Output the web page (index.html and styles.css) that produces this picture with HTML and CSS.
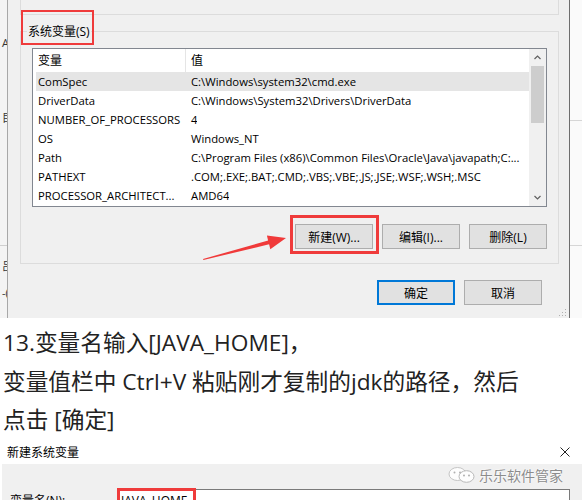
FILE: index.html
```
<!DOCTYPE html>
<html lang="zh-CN">
<head>
<meta charset="utf-8">
<title>系统变量</title>
<link rel="stylesheet" href="styles.css">
</head>
<body>
<div class="shot1">
  <div class="lstrip">
    <div class="frag fa">A</div>
    <div class="frag fb">目</div>
    <div class="sline"></div>
    <div class="frag fc">吕</div>
    <div class="frag fd">-(</div>
  </div>
  <div class="dlg">
    <div class="prev"></div>
    <div class="group">
      <div class="legend">系统变量(S)</div>
      <div class="list">
        <div class="listmain">
          <div class="row head"><span class="c1">变量</span><span class="c2">值</span></div>
          <div class="row sel"><span class="c1">ComSpec</span><span class="c2">C:\Windows\system32\cmd.exe</span></div>
          <div class="row"><span class="c1">DriverData</span><span class="c2">C:\Windows\System32\Drivers\DriverData</span></div>
          <div class="row"><span class="c1">NUMBER_OF_PROCESSORS</span><span class="c2">4</span></div>
          <div class="row"><span class="c1">OS</span><span class="c2">Windows_NT</span></div>
          <div class="row"><span class="c1">Path</span><span class="c2">C:\Program Files (x86)\Common Files\Oracle\Java\javapath;C:...</span></div>
          <div class="row"><span class="c1">PATHEXT</span><span class="c2">.COM;.EXE;.BAT;.CMD;.VBS;.VBE;.JS;.JSE;.WSF;.WSH;.MSC</span></div>
          <div class="row"><span class="c1">PROCESSOR_ARCHITECT...</span><span class="c2">AMD64</span></div>
        </div>
        <div class="scroll">
          <div class="sbtn"><svg width="7" height="5" viewBox="0 0 7 5"><polyline points="0.5,4 3.5,1 6.5,4" fill="none" stroke="#606060" stroke-width="1.2"/></svg></div>
          <div class="thumb"></div>
          <div class="track"></div>
          <div class="sbtn"><svg width="7" height="5" viewBox="0 0 7 5"><polyline points="0.5,1 3.5,4 6.5,1" fill="none" stroke="#606060" stroke-width="1.2"/></svg></div>
        </div>
      </div>
      <div class="btns">
        <div class="btn">新建(W)...</div>
        <div class="btn">编辑(I)...</div>
        <div class="btn">删除(L)</div>
      </div>
    </div>
    <div class="okrow">
      <div class="btn default">确定</div>
      <div class="btn">取消</div>
    </div>
    <svg class="grip" width="9" height="9" viewBox="0 0 9 9">
      <rect x="7" y="1" width="1" height="1" fill="#b0b0b0"/>
      <rect x="4" y="4" width="1" height="1" fill="#b0b0b0"/>
      <rect x="7" y="4" width="1" height="1" fill="#b0b0b0"/>
      <rect x="1" y="7" width="1" height="1" fill="#b0b0b0"/>
      <rect x="4" y="7" width="1" height="1" fill="#b0b0b0"/>
      <rect x="7" y="7" width="1" height="1" fill="#b0b0b0"/>
    </svg>
  </div>
  <div class="rstrip">
    <div class="rline r1"></div>
    <div class="rline r2"></div>
  </div>
  <div class="redbox rb1"></div>
  <div class="redbox rb2"></div>
  <svg class="arrow" width="582" height="318" viewBox="0 0 582 318">
    <polygon points="203,259 268.1,240.5 266.9,235.6 286,238 270.3,249.2 269.1,244.3 203.4,260" fill="#f03a3a"/>
  </svg>
</div>

<div class="article">
  <p>13.变量名输入[JAVA_HOME]，</p>
  <p>变量值栏中 Ctrl+V 粘贴刚才复制的jdk的路径，然后</p>
  <p>点击 [确定]</p>
</div>

<div class="shot2">
  <div class="titlebar">
    <span>新建系统变量</span>
    <svg width="10" height="10" viewBox="0 0 10 10"><path d="M0.5 0.5 L9.5 9.5 M9.5 0.5 L0.5 9.5" stroke="#222" stroke-width="1"/></svg>
  </div>
  <div class="body2">
    <div class="row2">
      <span class="lbl2">变量名(N):</span>
      <div class="input">JAVA_HOME</div>
    </div>
  </div>
  <div class="redbox rb3"></div>
  <div class="wm">
    <svg width="27" height="16" viewBox="0 0 27 16">
      <ellipse cx="9.5" cy="7" rx="8.5" ry="6.5" fill="#fdfdfd" stroke="#c4c4c4" stroke-width="1"/>
      <ellipse cx="18.5" cy="9.5" rx="7.5" ry="5.8" fill="#fdfdfd" stroke="#b8b8b8" stroke-width="1"/>
      <circle cx="6.5" cy="5.5" r="1" fill="#b0b0b0"/>
      <circle cx="12" cy="5.5" r="1" fill="#b0b0b0"/>
      <circle cx="16" cy="8.5" r="0.9" fill="#a8a8a8"/>
      <circle cx="21" cy="8.5" r="0.9" fill="#a8a8a8"/>
    </svg>
    <span>乐乐软件管家</span>
  </div>
</div>
</body>
</html>
```

FILE: styles.css
```
* { box-sizing: border-box; }
body {
  margin: 0;
  width: 582px;
  background: #fff;
  font-family: "Open Sans", "Noto Sans CJK SC", sans-serif;
  color: #000;
}
p { margin: 0; }

.shot1 {
  position: relative;
  display: flex;
  height: 318px;
  background: #f0f0f0;
}
.lstrip {
  width: 8px;
  border-right: 1px solid #a8a8a8;
  background: #f4f4f4;
  overflow: hidden;
  display: flex;
  flex-direction: column;
  font-size: 11px;
  color: #333;
}
.frag { line-height: 12px; height: 12px; padding-left: 2px; white-space: nowrap; }
.fa { margin-top: 37px; }
.fb { margin-top: 63px; }
.sline { margin-top: 121px; height: 1px; background: #cfcfcf; }
.fc { margin-top: 14px; }
.fd { margin-top: 15px; }

.dlg {
  flex: 1;
  border-right: 1px solid #6e6e6e;
  display: flex;
  flex-direction: column;
  font-size: 12px;
}
.rstrip {
  width: 12px;
  background: #fafafa;
  display: flex;
  flex-direction: column;
}
.rline { height: 1px; background: #d6d6d6; }
.r1 { margin-top: 120px; }
.r2 { margin-top: 124px; }

.prev {
  margin-left: 12px;
  width: 539px;
  height: 15px;
  border: 1px solid #dcdcdc;
  border-top: none;
}
.group {
  margin: 16px 0 0 12px;
  width: 539px;
  height: 233px;
  border: 1px solid #dcdcdc;
  display: flex;
  flex-direction: column;
}
.legend {
  align-self: flex-start;
  margin: -8px 0 0 6px;
  padding: 0 1px;
  height: 16px;
  line-height: 16px;
  background: #f0f0f0;
}
.list {
  margin: 8px 0 0 11px;
  width: 515px;
  height: 159px;
  border: 1px solid #828790;
  background: #fff;
  display: flex;
  font-size: 11.3px;
}
.listmain { flex: 1; overflow: hidden; }
.row {
  display: flex;
  height: 19px;
  line-height: 19px;
  white-space: nowrap;
}
.row.head { height: 23px; line-height: 23px; font-size: 12px; }
.c1 { width: 153px; padding-left: 5px; flex: none; overflow: hidden; }
.head .c1 { border-right: 1px solid #e5e5e5; }
.c2 { padding-left: 5px; overflow: hidden; }
.sel { background: linear-gradient(to right, #fff 3px, #e5e5e5 3px); }

.scroll {
  width: 17px;
  background: #f0f0f0;
  display: flex;
  flex-direction: column;
  align-items: center;
}
.sbtn {
  width: 17px;
  height: 17px;
  display: flex;
  align-items: center;
  justify-content: center;
}
.thumb { width: 13px; height: 57px; background: #cdcdcd; }
.track { flex: 1; }

.btns {
  display: flex;
  justify-content: flex-end;
  gap: 9px;
  margin: 17px 11px 0 0;
}
.btn {
  width: 78px;
  height: 25px;
  border: 1px solid #adadad;
  background: #e1e1e1;
  display: flex;
  align-items: center;
  justify-content: center;
  font-size: 12px;
}
.btn.default {
  border-color: #0078d7;
  box-shadow: inset 0 0 0 1px #0078d7;
}
.okrow {
  display: flex;
  justify-content: flex-end;
  gap: 9px;
  margin: 16px 27px 0 0;
}
.grip { align-self: flex-end; margin: auto 2px 1px 0; }

.redbox { position: absolute; border: 2px solid #ef3b3b; }
.rb1 { left: 21px; top: 10px; width: 73px; height: 35px; }
.rb2 { left: 290px; top: 215px; width: 89px; height: 39px; border-width: 3px; }
.arrow { position: absolute; left: 0; top: 0; pointer-events: none; }

.article {
  padding: 6px 0 0 3px;
  font-size: 22.7px;
  line-height: 38.5px;
  color: #222;
  white-space: nowrap;
}

.shot2 {
  position: relative;
  margin-top: 1px;
  font-size: 12px;
  height: 60px;
  overflow: hidden;
}
.titlebar {
  height: 23px;
  display: flex;
  align-items: center;
  justify-content: space-between;
  padding: 0 12px 0 7px;
}
.body2 {
  margin-left: 2px;
  height: 60px;
  background: #f0f0f0;
  padding-top: 25px;
}
.row2 { display: flex; }
.lbl2 { width: 115px; padding-left: 8px; line-height: 23px; }
.input {
  flex: 1;
  margin-right: 12px;
  height: 23px;
  border: 1px solid #7a7a7a;
  background: #fff;
  padding-left: 3px;
  line-height: 21px;
}
.rb3 { left: 117px; top: 47px; width: 79px; height: 30px; border-width: 3px; }
.wm {
  position: absolute;
  left: 448px;
  top: 24px;
  display: flex;
  align-items: center;
  gap: 4px;
  font-size: 14px;
  color: #8c8c8c;
  text-shadow: 0 0 2px #fff, 0 0 2px #fff;
}
```
